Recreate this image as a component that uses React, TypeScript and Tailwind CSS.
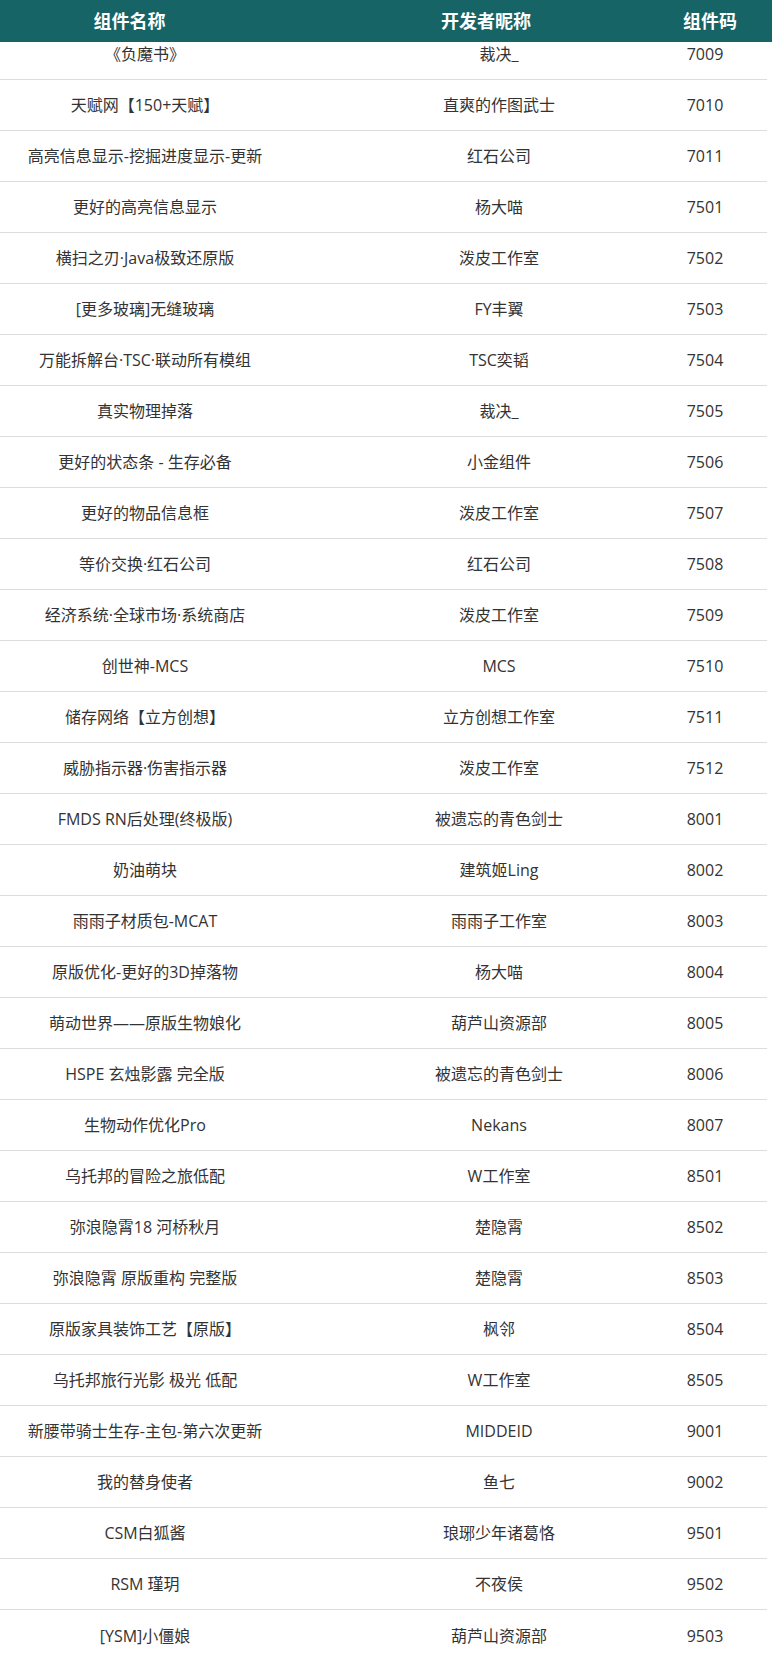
import React from "react";

type Row = { name: string; dev: string; code: string };

const rows: Row[] = [
  { name: "《负魔书》", dev: "裁决_", code: "7009" },
  { name: "天赋网【150+天赋】", dev: "直爽的作图武士", code: "7010" },
  { name: "高亮信息显示-挖掘进度显示-更新", dev: "红石公司", code: "7011" },
  { name: "更好的高亮信息显示", dev: "杨大喵", code: "7501" },
  { name: "横扫之刃·Java极致还原版", dev: "泼皮工作室", code: "7502" },
  { name: "[更多玻璃]无缝玻璃", dev: "FY丰翼", code: "7503" },
  { name: "万能拆解台·TSC·联动所有模组", dev: "TSC奕韬", code: "7504" },
  { name: "真实物理掉落", dev: "裁决_", code: "7505" },
  { name: "更好的状态条 - 生存必备", dev: "小金组件", code: "7506" },
  { name: "更好的物品信息框", dev: "泼皮工作室", code: "7507" },
  { name: "等价交换·红石公司", dev: "红石公司", code: "7508" },
  { name: "经济系统·全球市场·系统商店", dev: "泼皮工作室", code: "7509" },
  { name: "创世神-MCS", dev: "MCS", code: "7510" },
  { name: "储存网络【立方创想】", dev: "立方创想工作室", code: "7511" },
  { name: "威胁指示器·伤害指示器", dev: "泼皮工作室", code: "7512" },
  { name: "FMDS RN后处理(终极版)", dev: "被遗忘的青色剑士", code: "8001" },
  { name: "奶油萌块", dev: "建筑姬Ling", code: "8002" },
  { name: "雨雨子材质包-MCAT", dev: "雨雨子工作室", code: "8003" },
  { name: "原版优化-更好的3D掉落物", dev: "杨大喵", code: "8004" },
  { name: "萌动世界——原版生物娘化", dev: "葫芦山资源部", code: "8005" },
  { name: "HSPE 玄烛影露 完全版", dev: "被遗忘的青色剑士", code: "8006" },
  { name: "生物动作优化Pro", dev: "Nekans", code: "8007" },
  { name: "乌托邦的冒险之旅低配", dev: "W工作室", code: "8501" },
  { name: "弥浪隐霄18 河桥秋月", dev: "楚隐霄", code: "8502" },
  { name: "弥浪隐霄 原版重构 完整版", dev: "楚隐霄", code: "8503" },
  { name: "原版家具装饰工艺【原版】", dev: "枫邻", code: "8504" },
  { name: "乌托邦旅行光影 极光 低配", dev: "W工作室", code: "8505" },
  { name: "新腰带骑士生存-主包-第六次更新", dev: "MIDDEID", code: "9001" },
  { name: "我的替身使者", dev: "鱼七", code: "9002" },
  { name: "CSM白狐酱", dev: "琅琊少年诸葛恪", code: "9501" },
  { name: "RSM 瑾玥", dev: "不夜侯", code: "9502" },
  { name: "[YSM]小僵娘", dev: "葫芦山资源部", code: "9503" },
];

const font = {
  fontFamily: '"Open Sans", "Noto Sans CJK SC", sans-serif',
};

export default function App() {
  return (
    <div className="w-[772px] h-[1661px] overflow-hidden bg-white" style={font}>
      {/* sticky-looking header sits over the first row */}
      <div className="relative z-10 h-[42px] bg-[#176466] grid grid-cols-[259px_401px_100px] items-center text-white text-[18px] font-bold">
        <div className="text-center">组件名称</div>
        <div className="text-center pl-[53px]">开发者昵称</div>
        <div className="text-center">组件码</div>
      </div>

      <div className="-mt-[13px]">
        {rows.map((r) => (
          <div
            key={r.code}
            className="w-[767px] h-[51px] border-b border-[#dddddd] last:border-b-0 grid grid-cols-[290px_360px_110px] items-center text-[16px] text-[#333333]"
          >
            <div className="text-center whitespace-nowrap">{r.name}</div>
            <div className="text-center whitespace-nowrap pl-[58px]">{r.dev}</div>
            <div className="text-center">{r.code}</div>
          </div>
        ))}
      </div>
    </div>
  );
}
